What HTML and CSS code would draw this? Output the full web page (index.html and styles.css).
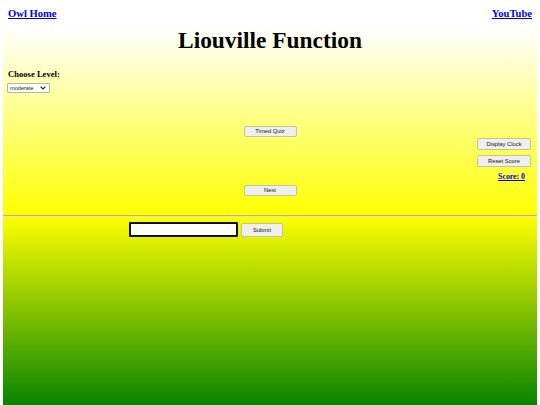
FILE: index.html
```html
<!DOCTYPE html>
<html>
<head>
<meta charset="utf-8">
<title>Liouville Function</title>
<link rel="stylesheet" href="styles.css">
</head>
<body>
<header class="topbar">
  <a class="navlink" href="#">Owl Home</a>
  <a class="navlink" href="#">YouTube</a>
</header>
<section class="upper">
  <h1 class="title">Liouville Function</h1>
  <div class="level">
    <div class="level-label">Choose Level:</div>
    <div class="select">
      <span>moderate</span>
      <svg class="chev" width="6" height="4" viewBox="0 0 6 4"><path d="M0.6 0.6 L3 3 L5.4 0.6" fill="none" stroke="#222" stroke-width="1.1"/></svg>
    </div>
  </div>
  <div class="center-row first"><button class="btn btn-mid">Timed Quiz</button></div>
  <div class="side">
    <button class="btn btn-side">Display Clock</button>
    <button class="btn btn-side">Reset Score</button>
    <a class="score" href="#">Score: 0</a>
  </div>
  <div class="center-row"><button class="btn btn-mid">Next</button></div>
</section>
<hr class="rule">
<section class="lower">
  <div class="answer">
    <div class="input"></div>
    <button class="btn btn-submit">Submit</button>
  </div>
</section>
</body>
</html>
```
FILE: styles.css
```css
html, body {
  margin: 0;
  padding: 0;
  background: #ffffff;
  width: 540px;
  height: 405px;
  overflow: hidden;
}
body {
  font-family: "Liberation Serif", "Times New Roman", serif;
  color: #000;
}
.topbar {
  display: flex;
  justify-content: space-between;
  padding: 8px 8px 0 8px;
  height: 19px;
  line-height: 12px;
}
.navlink {
  font-size: 10.6px;
  font-weight: bold;
  color: #0000ee;
  text-decoration: underline;
}
.upper {
  margin: 0 3px;
  height: 188px;
  background: linear-gradient(to bottom, #ffffff 0%, #ffff00 100%);
  display: flex;
  flex-direction: column;
}
.title {
  margin: 0;
  font-size: 23.4px;
  line-height: 27px;
  text-align: center;
  font-weight: bold;
}
.level {
  margin-top: 15px;
  padding-left: 5px;
}
.level-label {
  font-size: 8.6px;
  font-weight: bold;
  line-height: 10px;
}
.select {
  margin-top: 4px;
  margin-left: -1px;
  width: 43px;
  height: 10px;
  border: 1px solid #b5b5a5;
  border-radius: 1px;
  background: #fff;
  display: flex;
  align-items: center;
  justify-content: space-between;
  padding: 0 2px 0 2px;
  box-sizing: border-box;
  font-family: "Liberation Sans", Arial, sans-serif;
  font-size: 5.6px;
  color: #222;
}
.chev { margin-right: 1px; }
.center-row {
  display: flex;
  justify-content: center;
}
.center-row.first { margin-top: 33px; }
.btn {
  font-family: "Liberation Sans", Arial, sans-serif;
  font-size: 5.8px;
  color: #111;
  background: #efefef;
  border: 1px solid #c4c49c;
  border-radius: 2px;
  padding: 0;
  height: 11px;
  line-height: 9px;
  text-align: center;
  box-sizing: border-box;
}
.btn-mid { width: 53px; }
.btn-side { width: 54px; height: 12px; line-height: 10px; }
.side {
  display: flex;
  flex-direction: column;
  align-items: flex-end;
  padding-right: 6px;
  margin-top: 1px;
  gap: 5px;
}
.score {
  font-size: 7.8px;
  font-weight: bold;
  color: #0000ee;
  text-decoration: underline;
  line-height: 9px;
  margin-right: 6px;
}
.center-row:last-child { margin-top: 4px; }
.rule {
  margin: 0 3px;
  height: 0;
  border: none;
  border-top: 1px solid #b4b48a;
  border-bottom: 1px solid #e6e6a8;
  background: #ffff00;
}
.lower {
  margin: 0 3px;
  height: 195px;
  background: linear-gradient(to bottom, #ffff00 0%, #008000 100%);
}
.answer {
  display: flex;
  align-items: flex-start;
  padding: 5px 0 0 126px;
  gap: 3px;
}
.input {
  width: 109px;
  height: 15px;
  box-sizing: border-box;
  border: 2px solid #111;
  border-radius: 1px;
  background: #fff;
}
.btn-submit {
  width: 42px;
  height: 14px;
  margin-top: 1px;
  line-height: 12px;
}
```
